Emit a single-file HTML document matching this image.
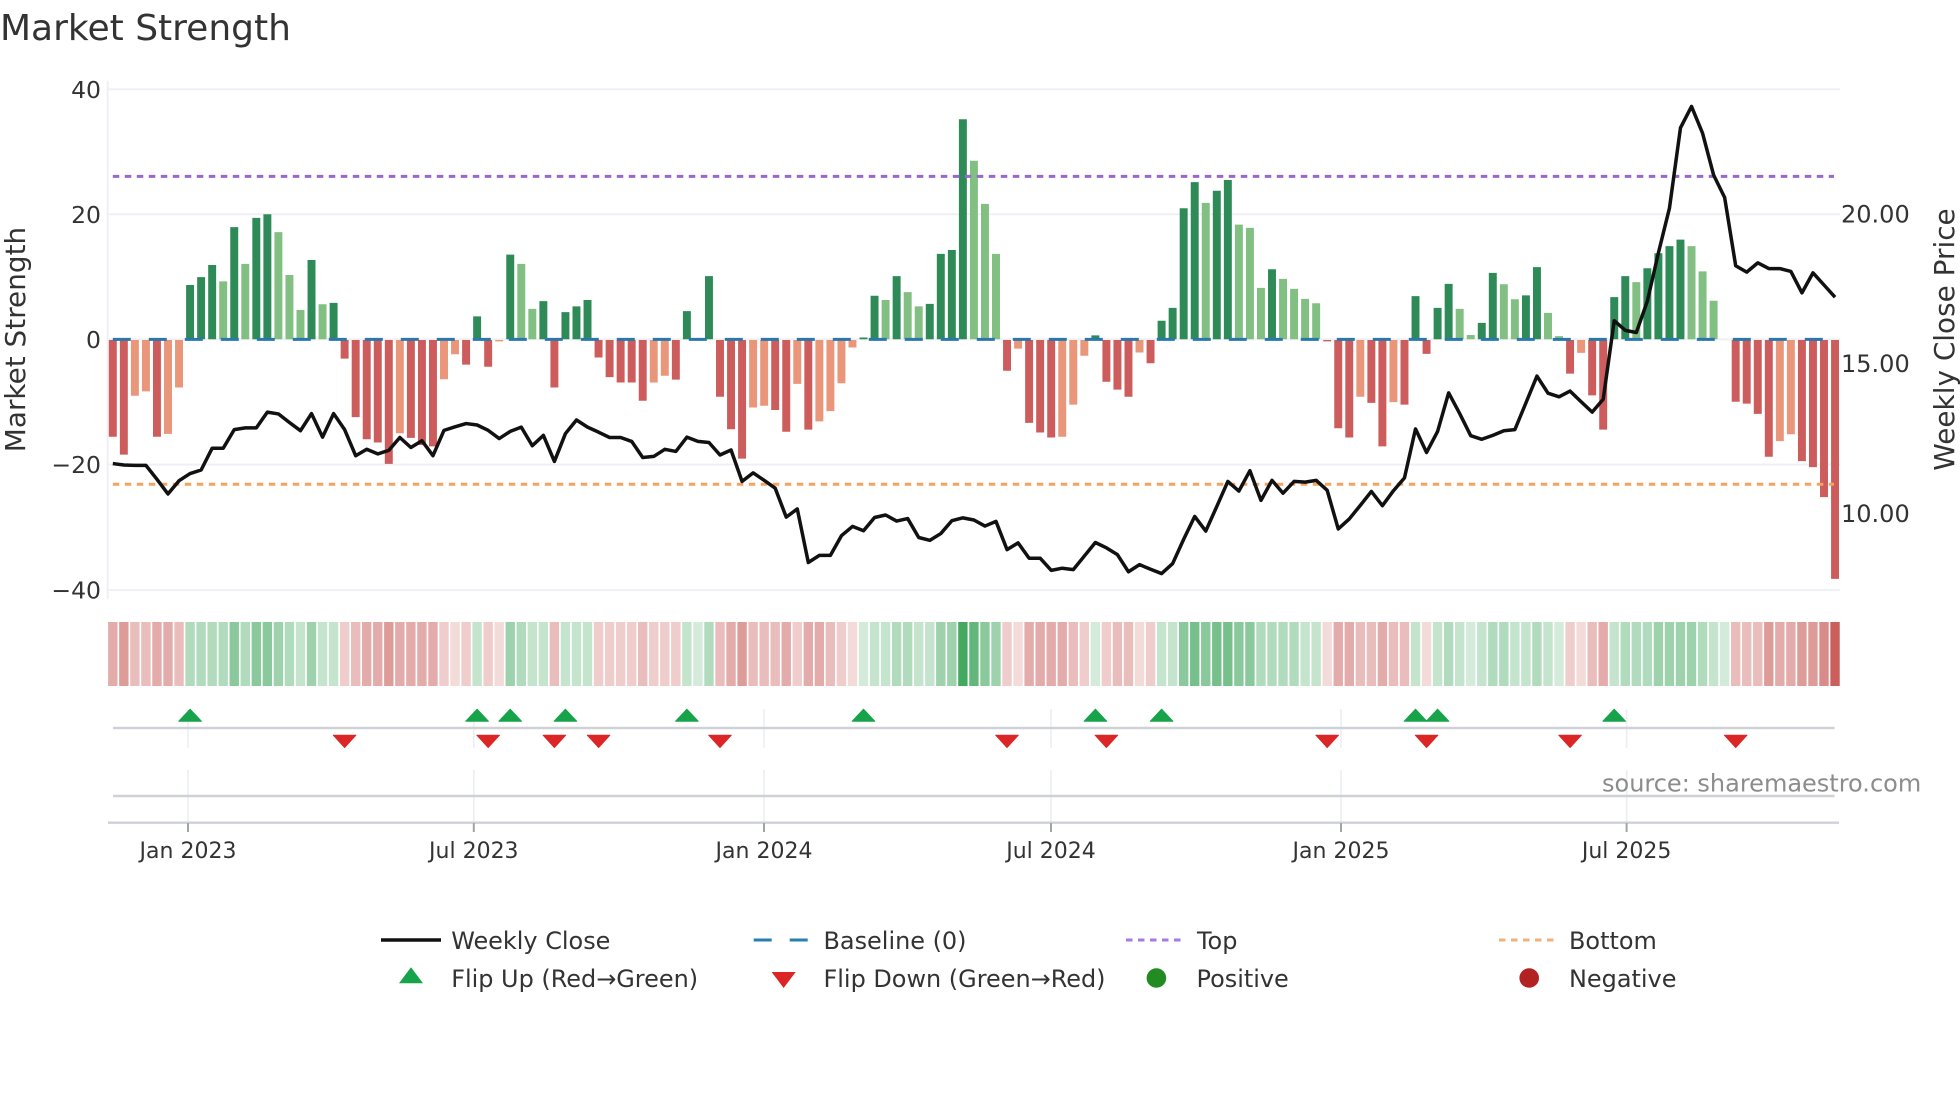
<!DOCTYPE html>
<html lang="en">
<head>
<meta charset="utf-8">
<title>Market Strength</title>
<style>
html,body{margin:0;padding:0;background:#fff;width:1960px;height:1102px;overflow:hidden}
svg{display:block}
text{font-family:"DejaVu Sans","Liberation Sans",sans-serif;fill:#333}
</style>
</head>
<body>
<svg width="1960" height="1102" viewBox="0 0 1960 1102" xmlns="http://www.w3.org/2000/svg">
<rect width="1960" height="1102" fill="#fff"/>
<text x="0" y="40" font-size="36">Market Strength</text>

<!-- grid -->
<g stroke="#eff0f6" stroke-width="2" fill="none">
<path d="M107.7 81V599"/>
<path d="M108 89.3H1840M108 214.3H1840M108 339.3H1840M108 464.6H1840M108 590H1840"/>
</g>

<!-- y labels -->
<g font-size="23.5" text-anchor="end">
<text x="101" y="97.8">40</text>
<text x="101" y="222.8">20</text>
<text x="101" y="347.8">0</text>
<text x="101" y="473.1">−20</text>
<text x="101" y="598.5">−40</text>
</g>
<g font-size="24">
<text x="1841" y="222.3">20.00</text>
<text x="1841" y="372">15.00</text>
<text x="1841" y="522">10.00</text>
</g>
<text transform="translate(25 339.5) rotate(-90)" font-size="27.9" text-anchor="middle">Market Strength</text>
<text transform="translate(1954 339.5) rotate(-90)" font-size="27.9" text-anchor="middle">Weekly Close Price</text>

<!-- bars -->
<g transform="translate(112.8 60) scale(11.04 .35714)" fill="none" stroke-width=".72">
<path stroke="#cd5c5c" d="M0 784V1055M1 784V1105M4 784V1055M21 784V836M22 784V1000M23 784V1062M24 784V1071M25 784V1131M27 784V1058M28 784V1078M29 784V1082M32 784V853M34 784V859M40 784V917M44 784V833M45 784V888M46 784V903M47 784V903M48 784V954M51 784V895M55 784V943M56 784V1034M57 784V1116M60 784V980M61 784V1041M63 784V1035M81 784V870M83 784V1016M84 784V1043M85 784V1057M90 784V901M91 784V923M92 784V943M94 784V849M110 784V788M111 784V1031M112 784V1057M114 784V960M115 784V1082M117 784V965M119 784V823M132 784V878M134 784V939M135 784V1035M147 784V957M148 784V962M149 784V991M150 784V1111M153 784V1123M154 784V1140M155 784V1224M156 784V1453"/>
<path stroke="#e9967a" d="M2 784V940M3 784V928M5 784V1047M6 784V917M26 784V1045M30 784V894M31 784V824M35 784V788M49 784V903M50 784V884M58 784V973M59 784V968M62 784V907M64 784V1012M65 784V983M66 784V905M67 784V805M82 784V808M86 784V1055M87 784V965M88 784V828M93 784V819M113 784V943M116 784V958M133 784V820M151 784V1067M152 784V1048"/>
<path stroke="#2e8b57" d="M7 782V630M8 782V608M9 782V574M11 782V468M13 782V442M14 782V432M18 782V560M20 782V680M33 782V718M36 782V545M39 782V675M41 782V706M42 782V690M43 782V672M52 782V703M54 782V605M68 782V777M69 782V660M71 782V605M74 782V683M75 782V543M76 782V532M77 782V166M89 782V771M95 782V730M96 782V694M97 782V415M98 782V342M100 782V366M101 782V336M105 782V586M118 782V661M120 782V694M121 782V627M124 782V736M125 782V596M128 782V659M129 782V580M136 782V664M137 782V605M139 782V583M140 782V541M141 782V521M142 782V503"/>
<path stroke="#82bf82" d="M10 782V620M12 782V571M15 782V482M16 782V602M17 782V700M19 782V684M37 782V571M38 782V697M70 782V672M72 782V650M73 782V690M78 782V282M79 782V403M80 782V543M99 782V400M102 782V461M103 782V470M104 782V638M106 782V613M107 782V641M108 782V669M109 782V681M122 782V697M123 782V770M126 782V628M127 782V670M130 782V708M131 782V773M138 782V622M143 782V521M144 782V592M145 782V674"/>
</g>

<!-- reference lines -->
<g fill="none" stroke-width="3">
<path d="M112.8 339.4H1834" stroke="#2a78ab" stroke-dasharray="18 18"/>
<path d="M112.8 176.4H1834" stroke="#9966cc" stroke-dasharray="6.5 5.5"/>
<path d="M112.8 484.3H1834" stroke="#f4a460" stroke-dasharray="6.5 5.5"/>
</g>

<!-- price line -->
<path transform="translate(112.8 60) scale(11.04 .35714)" fill="none" stroke="#111" stroke-width="3.5" stroke-linejoin="round" vector-effect="non-scaling-stroke" d="M0 1130L1 1134 2 1135 3 1135 4 1174 5 1215 6 1178 7 1158 8 1148 9 1087 10 1087 11 1035 12 1030 13 1030 14 986 15 991 16 1015 17 1038 18 990 19 1056 20 990 21 1035 22 1108 23 1090 24 1103 25 1093 26 1057 27 1085 28 1066 29 1108 30 1037 31 1027 32 1018 33 1022 34 1037 35 1060 36 1040 37 1028 38 1080 39 1051 40 1124 41 1046 42 1008 43 1028 44 1042 45 1057 46 1057 47 1068 48 1113 49 1110 50 1090 51 1096 52 1056 53 1068 54 1071 55 1106 56 1092 57 1180 58 1156 59 1177 60 1199 61 1280 62 1257 63 1407 64 1387 65 1387 66 1332 67 1306 68 1318 69 1281 70 1274 71 1291 72 1284 73 1337 74 1345 75 1326 76 1290 77 1282 78 1288 79 1305 80 1292 81 1371 82 1352 83 1395 84 1395 85 1429 86 1423 87 1427 88 1389 89 1351 90 1366 91 1385 92 1433 93 1413 94 1426 95 1438 96 1410 97 1342 98 1278 99 1319 100 1250 101 1180 102 1207 103 1150 104 1233 105 1177 106 1213 107 1180 108 1182 109 1177 110 1205 111 1313 112 1285 113 1247 114 1208 115 1248 116 1206 117 1170 118 1033 119 1099 120 1040 121 932 122 990 123 1052 124 1062 125 1051 126 1038 127 1035 128 960 129 885 130 933 131 943 132 927 133 957 134 986 135 950 136 730 137 757 138 763 139 675 140 540 141 415 142 190 143 130 144 205 145 322 146 385 147 576 148 594 149 568 150 584 151 584 152 592 153 652 154 596 155 630 156 664"/>

<!-- heat strip -->
<g transform="translate(112.8 622) scale(11.04 64)" fill="none" stroke-width=".85">
<g stroke="#c85a55">
<path stroke-opacity=".22" d="M31 0V1M35 0V1M67 0V1M82 0V1M93 0V1M110 0V1M119 0V1M133 0V1"/>
<path stroke-opacity=".3" d="M21 0V1M30 0V1M32 0V1M34 0V1M44 0V1M45 0V1M46 0V1M47 0V1M49 0V1M50 0V1M51 0V1M62 0V1M66 0V1M81 0V1M88 0V1M90 0V1M94 0V1M132 0V1"/>
<path stroke-opacity=".4" d="M2 0V1M3 0V1M6 0V1M22 0V1M40 0V1M48 0V1M55 0V1M58 0V1M59 0V1M60 0V1M65 0V1M87 0V1M91 0V1M92 0V1M113 0V1M114 0V1M116 0V1M117 0V1M134 0V1M147 0V1M148 0V1M149 0V1"/>
<path stroke-opacity=".5" d="M0 0V1M4 0V1M5 0V1M23 0V1M24 0V1M26 0V1M27 0V1M28 0V1M29 0V1M56 0V1M61 0V1M63 0V1M64 0V1M83 0V1M84 0V1M85 0V1M86 0V1M111 0V1M112 0V1M115 0V1M135 0V1M151 0V1M152 0V1"/>
<path stroke-opacity=".6" d="M1 0V1M25 0V1M57 0V1M150 0V1M153 0V1M154 0V1"/>
<path stroke-opacity=".7" d="M155 0V1"/>
<path stroke-opacity=".96" d="M156 0V1"/>
</g>
<g stroke="#3ca55a">
<path stroke-opacity=".22" d="M53 0V1M68 0V1M89 0V1M123 0V1M131 0V1M146 0V1"/>
<path stroke-opacity=".3" d="M17 0V1M19 0V1M20 0V1M33 0V1M38 0V1M39 0V1M41 0V1M42 0V1M43 0V1M52 0V1M69 0V1M70 0V1M73 0V1M74 0V1M95 0V1M96 0V1M108 0V1M109 0V1M118 0V1M120 0V1M122 0V1M124 0V1M127 0V1M128 0V1M130 0V1M136 0V1M145 0V1"/>
<path stroke-opacity=".4" d="M7 0V1M8 0V1M9 0V1M10 0V1M12 0V1M16 0V1M37 0V1M54 0V1M71 0V1M72 0V1M104 0V1M105 0V1M106 0V1M107 0V1M121 0V1M125 0V1M126 0V1M129 0V1M137 0V1M138 0V1M139 0V1M144 0V1"/>
<path stroke-opacity=".5" d="M15 0V1M18 0V1M36 0V1M75 0V1M76 0V1M80 0V1M140 0V1M141 0V1M142 0V1M143 0V1"/>
<path stroke-opacity=".6" d="M11 0V1M13 0V1M14 0V1M79 0V1M97 0V1M99 0V1M102 0V1M103 0V1"/>
<path stroke-opacity=".7" d="M98 0V1M100 0V1M101 0V1"/>
<path stroke-opacity=".8" d="M78 0V1"/>
<path stroke-opacity=".96" d="M77 0V1"/>
</g>
</g>

<!-- lower panel -->
<g fill="none" stroke="#ebeef5" stroke-width="1.6">
<path d="M188 709V748M188 770V823M473.8 709V748M473.8 770V823M764 709V748M764 770V823M1051 709V748M1051 770V823M1341 709V748M1341 770V823M1626.6 709V748M1626.6 770V823"/>
</g>
<g fill="none" stroke="#cfd1d6" stroke-width="2.4">
<path d="M113 728H1834.5M113 796H1834.5M108 822.7H1839"/>
</g>
<path fill="none" stroke="#a2a4a8" stroke-width="2" d="M188 823V832M473.8 823V832M764 823V832M1051 823V832M1341 823V832M1626.6 823V832"/>

<!-- flips -->
<path fill="#16a34a" stroke="#16a34a" stroke-width="1" stroke-linejoin="round" d="M178.8 721.2h22.6l-11.3-12zM465.8 721.2h22.6l-11.3-12zM498.9 721.2h22.6l-11.3-12zM554.1 721.2h22.6l-11.3-12zM675.6 721.2h22.6l-11.3-12zM852.2 721.2h22.6l-11.3-12zM1084.1 721.2h22.6l-11.3-12zM1150.3 721.2h22.6l-11.3-12zM1404.2 721.2h22.6l-11.3-12zM1426.3 721.2h22.6l-11.3-12zM1602.9 721.2h22.6l-11.3-12z"/>
<path fill="#dc2626" stroke="#dc2626" stroke-width="1" stroke-linejoin="round" d="M333.3 735.2h22.6l-11.3 12.3zM476.9 735.2h22.6l-11.3 12.3zM543.1 735.2h22.6l-11.3 12.3zM587.3 735.2h22.6l-11.3 12.3zM708.7 735.2h22.6l-11.3 12.3zM995.7 735.2h22.6l-11.3 12.3zM1095.1 735.2h22.6l-11.3 12.3zM1315.9 735.2h22.6l-11.3 12.3zM1415.3 735.2h22.6l-11.3 12.3zM1558.8 735.2h22.6l-11.3 12.3zM1724.4 735.2h22.6l-11.3 12.3z"/>

<!-- x labels -->
<g font-size="22" text-anchor="middle">
<text x="188" y="858">Jan 2023</text>
<text x="473.8" y="858">Jul 2023</text>
<text x="764" y="858">Jan 2024</text>
<text x="1051" y="858">Jul 2024</text>
<text x="1341" y="858">Jan 2025</text>
<text x="1626.6" y="858">Jul 2025</text>
</g>

<text x="1602" y="791.7" font-size="24" style="fill:#8c8c8c">source: sharemaestro.com</text>

<!-- legend -->
<g fill="none">
<path d="M381 940H441" stroke="#111" stroke-width="3.6"/>
<path d="M753.7 940H807.8" stroke="#2a7fb0" stroke-width="3" stroke-dasharray="18 18"/>
<path d="M1126 940H1180.5" stroke="#a67be0" stroke-width="3" stroke-dasharray="6.5 5.5"/>
<path d="M1499 940H1553.5" stroke="#f2b27a" stroke-width="3" stroke-dasharray="6.5 5.5"/>
</g>
<path fill="#16a34a" d="M399 983.3h24l-12-16z"/>
<path fill="#dc2626" d="M771.6 972h24.1l-12.05 16z"/>
<circle cx="1156.4" cy="978" r="9.8" fill="#228b22"/>
<circle cx="1529.2" cy="978" r="9.8" fill="#b22222"/>
<g font-size="23.95">
<text x="451.2" y="948.8">Weekly Close</text>
<text x="823.5" y="948.8">Baseline (0)</text>
<text x="1197" y="948.8">Top</text>
<text x="1569" y="948.8">Bottom</text>
<text x="451.2" y="987.2">Flip Up (Red→Green)</text>
<text x="823.5" y="987.2">Flip Down (Green→Red)</text>
<text x="1196.5" y="987.2">Positive</text>
<text x="1569" y="987.2">Negative</text>
</g>
</svg>
</body>
</html>
